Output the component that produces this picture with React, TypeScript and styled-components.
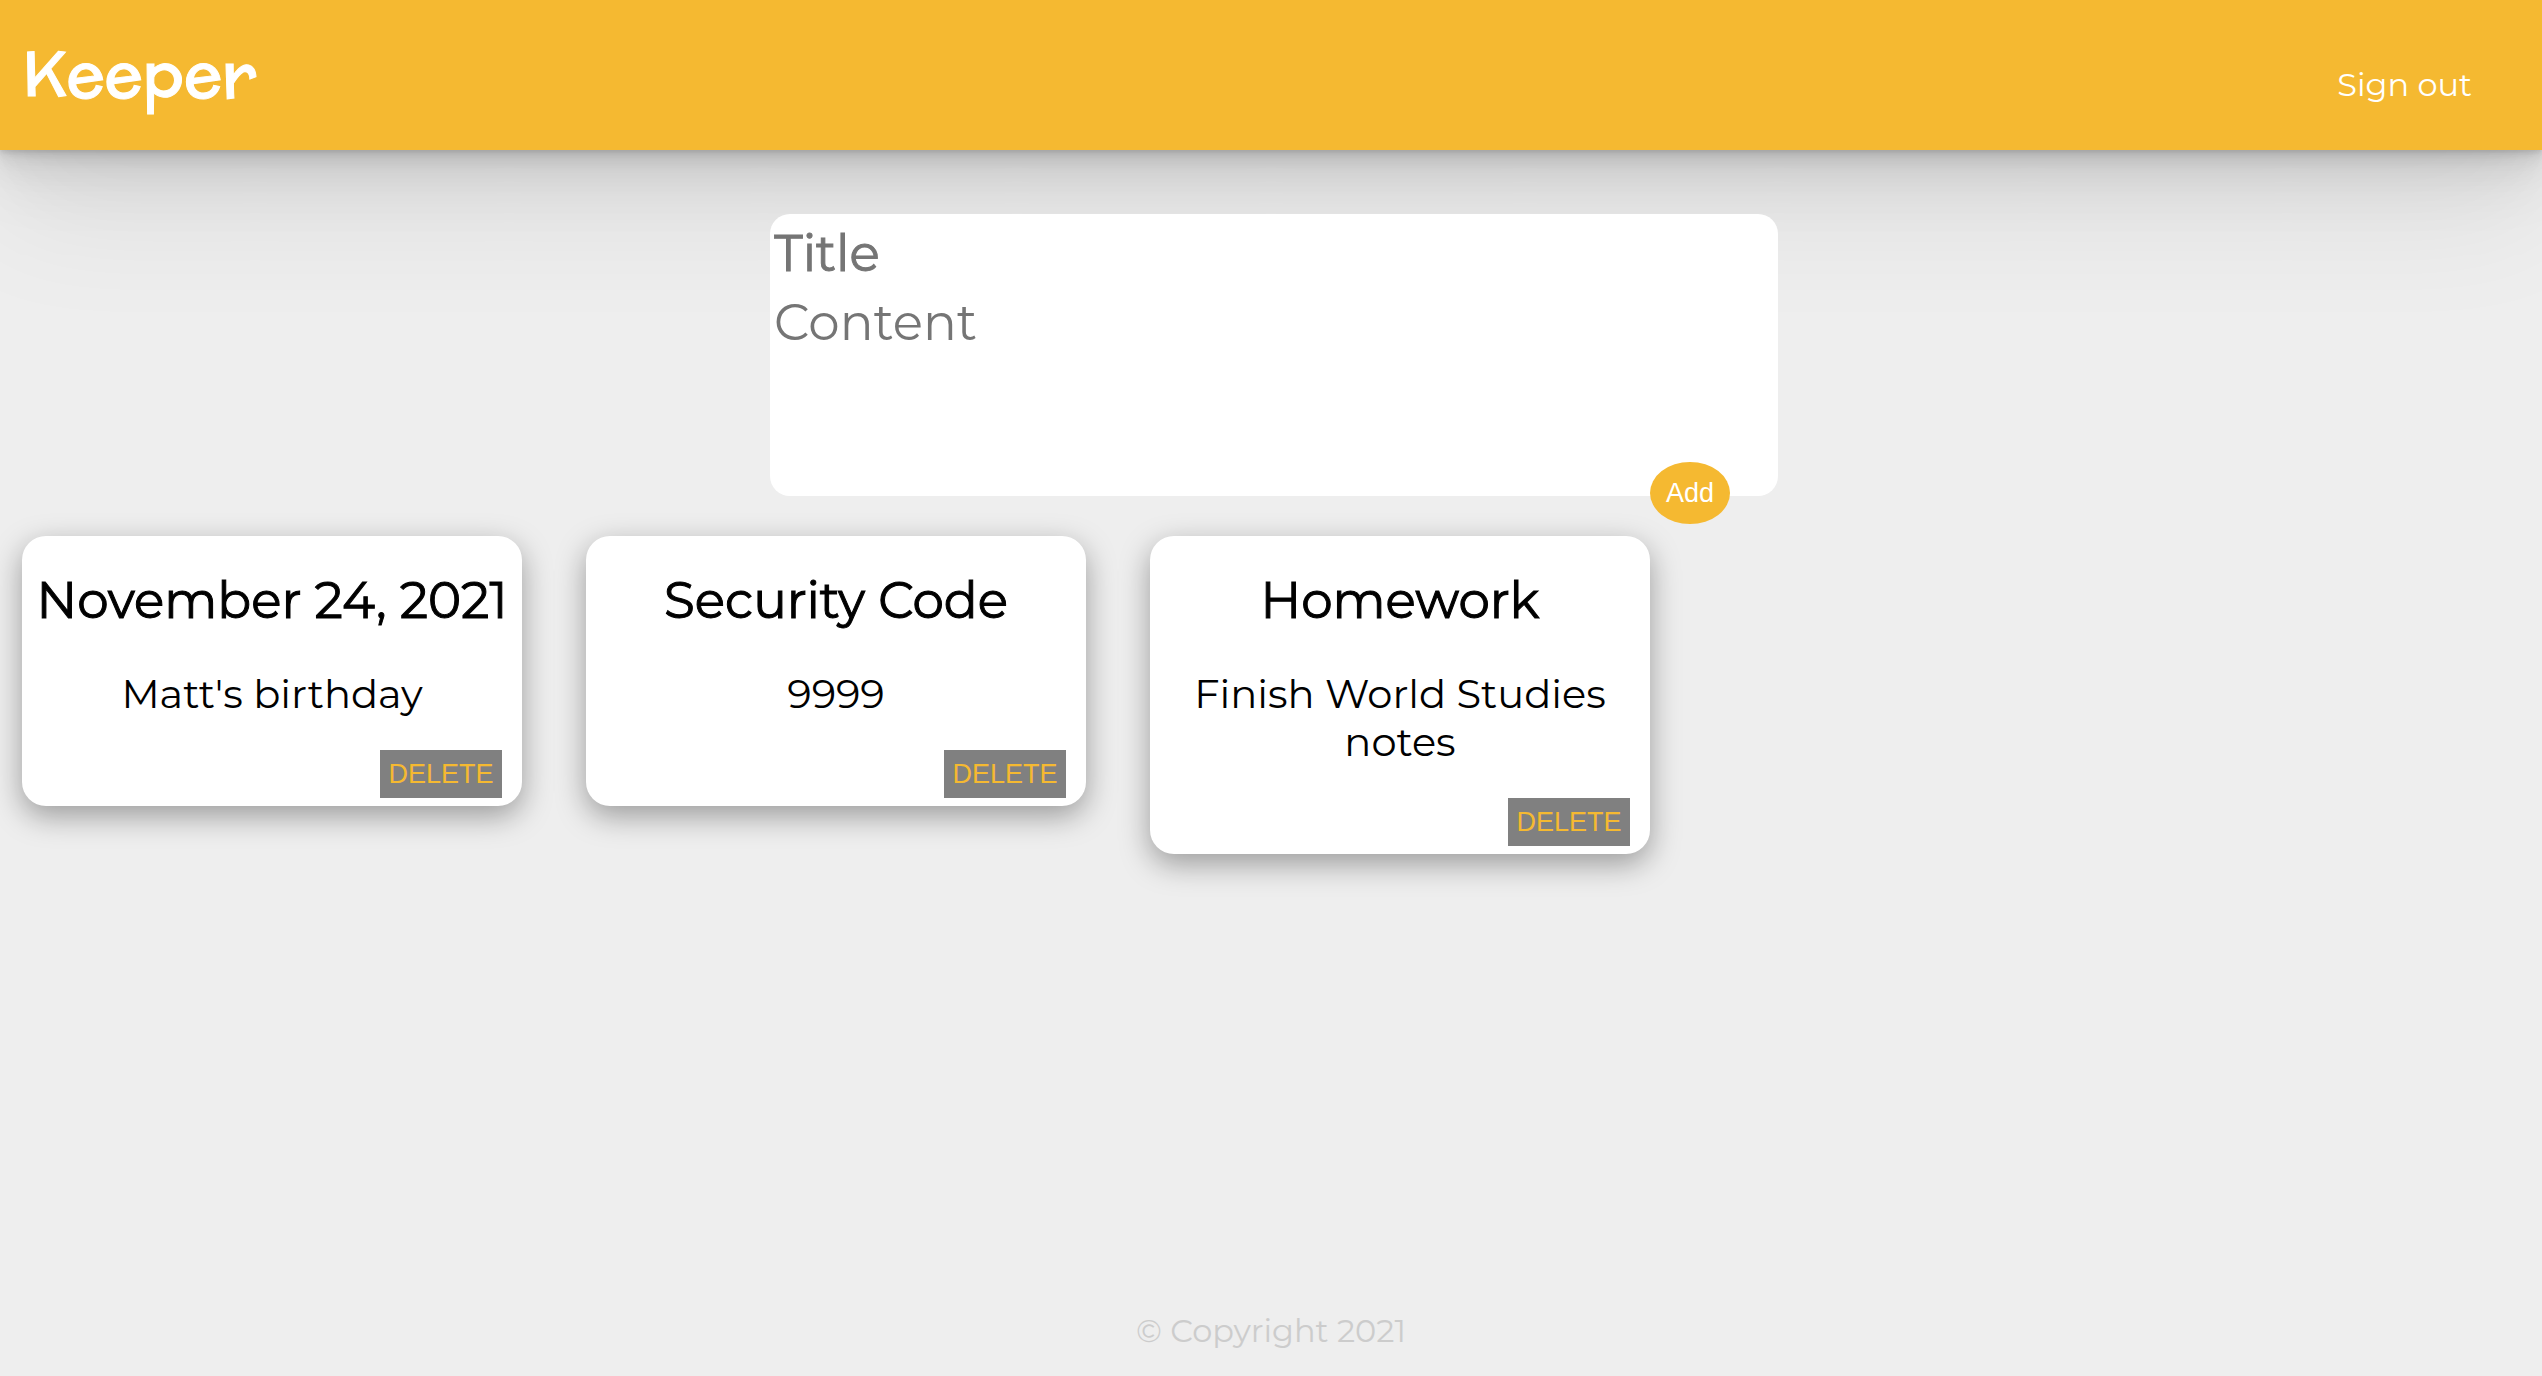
import React, { useState } from "react";
import styled, { createGlobalStyle } from "styled-components";

const yellow = "#f5b931";
const textFont = `Montserrat, Inter, "Open Sans", sans-serif`;
const buttonFont = `Arial, "Liberation Sans", sans-serif`;

const GlobalStyle = createGlobalStyle`
  *, *::before, *::after { box-sizing: border-box; }
  body { margin: 0; background: #eee; font-family: ${textFont}; color: #000; }
  h1, h2, p { margin: 0; }
  button, input, textarea { font: inherit; border: 0; }
`;

const Page = styled.div`
  min-height: 100vh;
  display: flex;
  flex-direction: column;
`;

const Header = styled.header`
  display: flex;
  align-items: center;
  justify-content: space-between;
  min-height: 150px;
  padding: 0 70px 0 22px;
  background: ${yellow};
  box-shadow:
    0 2px 4px rgba(0, 0, 0, 0.07),
    0 4px 8px rgba(0, 0, 0, 0.07),
    0 8px 16px rgba(0, 0, 0, 0.07),
    0 16px 32px rgba(0, 0, 0, 0.07),
    0 32px 64px rgba(0, 0, 0, 0.07),
    0 64px 128px rgba(0, 0, 0, 0.07);
`;

const Brand = styled.h1`
  padding-bottom: 4px;
  font-family: McLaren, Inter, sans-serif;
  font-size: 64px;
  font-weight: 400;
  line-height: 80px;
  color: #fff;
  -webkit-text-stroke: 1px currentColor;
`;

const SignOut = styled.a`
  padding-top: 20px;
  font-size: 32px;
  line-height: 40px;
  color: #fff;
  text-decoration: none;
`;

const Main = styled.main`
  flex: 1;
  display: flex;
  flex-direction: column;
  gap: 40px;
  padding: 64px 22px;
`;

const NoteForm = styled.form`
  position: relative;
  align-self: center;
  display: flex;
  flex-direction: column;
  width: 1008px;
  max-width: 100%;
  margin-left: 6px;
  padding: 4px;
  border-radius: 20px;
  background: #fff;
`;

const TitleInput = styled.input`
  width: 100%;
  height: 70px;
  padding: 0;
  background: transparent;
  font-size: 50px;
  outline: none;
  -webkit-text-stroke: 1px currentColor;
  &::placeholder { color: #757575; opacity: 1; }
`;

const ContentInput = styled.textarea`
  width: 100%;
  height: 204px;
  padding: 0;
  background: transparent;
  font-size: 50px;
  line-height: 70px;
  resize: none;
  outline: none;
  &::placeholder { color: #757575; opacity: 1; }
`;

const AddButton = styled.button`
  position: absolute;
  right: 48px;
  bottom: -28px;
  width: 80px;
  height: 62px;
  padding: 0;
  border-radius: 50%;
  background: ${yellow};
  color: #fff;
  && { font-family: ${buttonFont}; font-size: 27px; }
`;

const NoteGrid = styled.section`
  display: flex;
  flex-wrap: wrap;
  align-items: flex-start;
  gap: 64px;
`;

const Card = styled.article`
  display: flex;
  flex-direction: column;
  width: 500px;
  padding: 32px 10px 8px;
  border-radius: 24px;
  background: #fff;
  box-shadow: 0 10px 30px rgba(0, 0, 0, 0.35);
  text-align: center;
`;

const CardTitle = styled.h2`
  font-size: 50px;
  font-weight: 400;
  line-height: 66px;
  -webkit-text-stroke: 1px currentColor;
`;

const CardText = styled.p`
  margin: 36px 20px 32px;
  font-size: 40px;
  line-height: 48px;
`;

const DeleteButton = styled.button`
  align-self: flex-end;
  min-width: 122px;
  height: 48px;
  margin-right: 10px;
  padding: 0 8px;
  background: #808080;
  color: ${yellow};
  && { font-family: ${buttonFont}; font-size: 27px; }
`;

const Footer = styled.footer`
  padding-bottom: 25px;
  text-align: center;
  font-size: 32px;
  line-height: 40px;
  color: #ccc;
`;

interface Note {
  id: number;
  title: string;
  content: string;
}

const initialNotes: Note[] = [
  { id: 1, title: "November 24, 2021", content: "Matt's birthday" },
  { id: 2, title: "Security Code", content: "9999" },
  { id: 3, title: "Homework", content: "Finish World Studies notes" },
];

export default function App() {
  const [notes, setNotes] = useState(initialNotes);
  const [title, setTitle] = useState("");
  const [content, setContent] = useState("");

  function addNote(event: React.FormEvent) {
    event.preventDefault();
    if (!title && !content) return;
    setNotes([...notes, { id: Date.now(), title, content }]);
    setTitle("");
    setContent("");
  }

  return (
    <Page>
      <GlobalStyle />
      <Header>
        <Brand>Keeper</Brand>
        <SignOut href="#">Sign out</SignOut>
      </Header>
      <Main>
        <NoteForm onSubmit={addNote}>
          <TitleInput
            aria-label="Title"
            placeholder="Title"
            value={title}
            onChange={(e) => setTitle(e.target.value)}
          />
          <ContentInput
            aria-label="Content"
            placeholder="Content"
            value={content}
            onChange={(e) => setContent(e.target.value)}
          />
          <AddButton type="submit">Add</AddButton>
        </NoteForm>
        <NoteGrid>
          {notes.map((note) => (
            <Card key={note.id}>
              <CardTitle>{note.title}</CardTitle>
              <CardText>{note.content}</CardText>
              <DeleteButton
                type="button"
                onClick={() => setNotes(notes.filter((n) => n.id !== note.id))}
              >
                DELETE
              </DeleteButton>
            </Card>
          ))}
        </NoteGrid>
      </Main>
      <Footer>© Copyright 2021</Footer>
    </Page>
  );
}
